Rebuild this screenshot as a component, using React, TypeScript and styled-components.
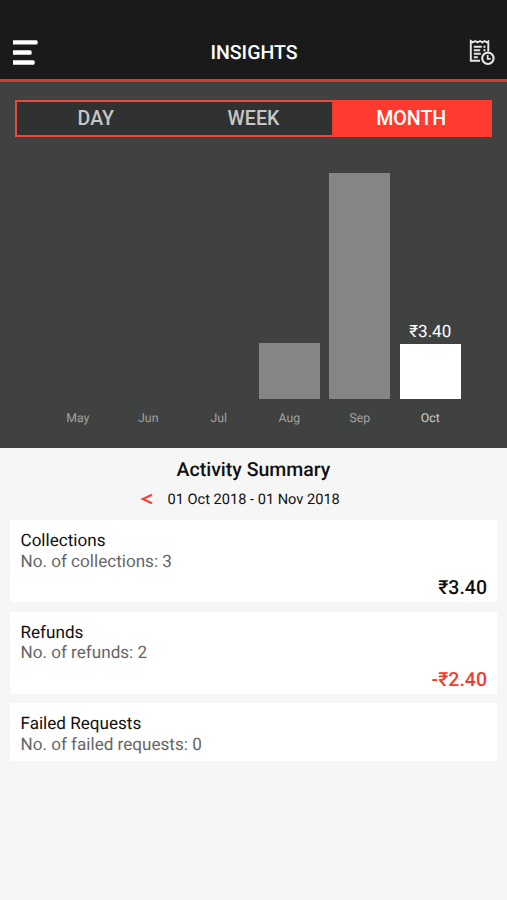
import React from "react";
import styled, { createGlobalStyle } from "styled-components";

const GlobalStyle = createGlobalStyle`
  * { box-sizing: border-box; }
  html, body { margin: 0; background: #f6f6f6; }
  button { font: inherit; border: 0; padding: 0; background: none; color: inherit; }
`;

const Screen = styled.main`
  width: 507px;
  height: 900px;
  overflow: hidden;
  display: flex;
  flex-direction: column;
  background: #f6f6f6;
  font-family: Roboto, "Liberation Sans", sans-serif;
  text-rendering: geometricPrecision;
  color: #111;
`;

const Header = styled.header`
  height: 82px;
  flex: none;
  padding: 26px 11px 0 12px;
  display: grid;
  grid-template-columns: 28px 1fr 28px;
  align-items: center;
  background: #1a1a1a;
  border-bottom: 3px solid #cf3c33;
`;

const IconButton = styled.button`
  display: flex;
  width: 28px;
  height: 28px;
`;

const Title = styled.h1`
  margin: 0;
  text-align: center;
  font-size: 19.5px;
  line-height: 24px;
  font-weight: 500;
  color: #fff;
`;

const ChartPanel = styled.section`
  height: 366px;
  flex: none;
  background: #404241;
  padding: 18px 15px 0;
`;

const Tabs = styled.div`
  display: flex;
  height: 37px;
  border: 2px solid #ea493e;
  background: #303231;
`;

const Tab = styled.button<{ $active?: boolean }>`
  flex: 1;
  font-size: 19.6px;
  font-weight: 500;
  color: ${(p) => (p.$active ? "#fff" : "#c6c6c6")};
  background: ${(p) => (p.$active ? "#ff3b30" : "transparent")};
  box-shadow: ${(p) => (p.$active ? "0 0 0 2px #ff3b30" : "none")};
  clip-path: inset(-2px -2px -2px 0);
`;

const Chart = styled.div`
  display: grid;
  grid-template-columns: repeat(6, 70.5px);
  margin-left: 27.5px;
  height: 290px;
`;

const Column = styled.div`
  display: flex;
  flex-direction: column;
  justify-content: flex-end;
  align-items: center;
`;

const BarValue = styled.span`
  font-size: 17px;
  line-height: 20px;
  margin-bottom: 2px;
  color: #fff;
`;

const Bar = styled.div<{ $active?: boolean }>`
  width: 61px;
  background: ${(p) => (p.$active ? "#fff" : "#848685")};
`;

const Month = styled.span<{ $active?: boolean }>`
  height: 28px;
  padding-top: 12px;
  font-size: 12.3px;
  line-height: 16px;
  color: ${(p) => (p.$active ? "#d0d0d0" : "#a2a3a2")};
`;

const Summary = styled.section`
  padding: 10px 10px 0;
`;

const SummaryTitle = styled.h2`
  margin: 0;
  text-align: center;
  font-size: 19.5px;
  line-height: 24px;
  font-weight: 500;
`;

const Period = styled.div`
  display: flex;
  align-items: center;
  height: 22px;
  margin: 6px 0 10px 130px;
  font-size: 14.6px;
  gap: 14.5px;
`;

const Previous = styled.button`
  display: flex;
  width: 13px;
`;

const Cards = styled.div`
  display: grid;
  gap: 9.5px;
`;

const Card = styled.article<{ $compact?: boolean }>`
  height: ${(p) => (p.$compact ? "57.5px" : "82px")};
  padding: 11px 10px 0 10.5px;
  background: #fff;
`;

const CardTitle = styled.h3`
  margin: 0;
  font-size: 17.1px;
  line-height: 20.5px;
  font-weight: 400;
`;

const CardCount = styled.p`
  margin: 0;
  font-size: 17.1px;
  line-height: 20.5px;
  color: #666;
`;

const Amount = styled.div<{ $negative?: boolean }>`
  margin-top: 4px;
  text-align: right;
  font-size: 19.5px;
  line-height: 24px;
  font-weight: 500;
  color: ${(p) => (p.$negative ? "#f23b32" : "#111")};
`;

const tabs = ["DAY", "WEEK", "MONTH"];

const months = [
  { label: "May", height: 0 },
  { label: "Jun", height: 0 },
  { label: "Jul", height: 0 },
  { label: "Aug", height: 56.5 },
  { label: "Sep", height: 226 },
  { label: "Oct", height: 55, value: "₹3.40" },
];

const activities = [
  { title: "Collections", count: "No. of collections: 3", amount: "₹3.40" },
  { title: "Refunds", count: "No. of refunds: 2", amount: "-₹2.40", negative: true },
  { title: "Failed Requests", count: "No. of failed requests: 0" },
];

const MenuIcon = () => (
  <svg width="28" height="28" viewBox="0 0 28 28" fill="#fff">
    <path d="M1 1.2h23.2a1.5 1.5 0 0 1 1.5 1.5v1.4a1.5 1.5 0 0 1-1.5 1.5H1zM1 11.3h17.2a1.5 1.5 0 0 1 1.5 1.5v1.4a1.5 1.5 0 0 1-1.5 1.5H1zM1 21.3h20.2a1.5 1.5 0 0 1 1.5 1.5v1.4a1.5 1.5 0 0 1-1.5 1.5H1z" />
  </svg>
);

const HistoryIcon = () => (
  <svg width="28" height="28" viewBox="0 0 28 28" fill="none" stroke="#e6e6e6" strokeWidth="1.9">
    <path d="M12 21.7H2.8V2l2.1 1.3L7.2 2l2.4 1.3L12 2l2.4 1.3L16.7 2l2.2 1.3 1.4-.9V12.6" />
    <path d="M5.8 7.7h8M5.8 11.2h6.4M5.8 14.8h7M5.8 18.3h4M15.4 7.7h2M15.4 11.2h2" />
    <circle cx="19.9" cy="19.3" r="5.7" strokeWidth="2.1" />
    <path d="M19.7 16v3.8h3" strokeWidth="1.7" />
  </svg>
);

export default function App() {
  return (
    <>
      <GlobalStyle />
      <Screen>
        <Header>
          <IconButton aria-label="Menu"><MenuIcon /></IconButton>
          <Title>INSIGHTS</Title>
          <IconButton aria-label="History"><HistoryIcon /></IconButton>
        </Header>
        <ChartPanel>
          <Tabs>
            {tabs.map((tab) => <Tab key={tab} $active={tab === "MONTH"}>{tab}</Tab>)}
          </Tabs>
          <Chart>
            {months.map((month) => (
              <Column key={month.label}>
                {month.value && <BarValue>{month.value}</BarValue>}
                <Bar $active={!!month.value} style={{ height: month.height }} />
                <Month $active={!!month.value}>{month.label}</Month>
              </Column>
            ))}
          </Chart>
        </ChartPanel>
        <Summary>
          <SummaryTitle>Activity Summary</SummaryTitle>
          <Period>
            <Previous aria-label="Previous month">
              <svg width="13" height="12" viewBox="0 0 13 12" fill="none" stroke="#f5443b" strokeWidth="2.3">
                <path d="M12 1.7 2.9 6 12 10.3" />
              </svg>
            </Previous>
            <span>01 Oct 2018 - 01 Nov 2018</span>
          </Period>
          <Cards>
            {activities.map((item) => (
              <Card key={item.title} $compact={!item.amount}>
                <CardTitle>{item.title}</CardTitle>
                <CardCount>{item.count}</CardCount>
                {item.amount && <Amount $negative={item.negative}>{item.amount}</Amount>}
              </Card>
            ))}
          </Cards>
        </Summary>
      </Screen>
    </>
  );
}
